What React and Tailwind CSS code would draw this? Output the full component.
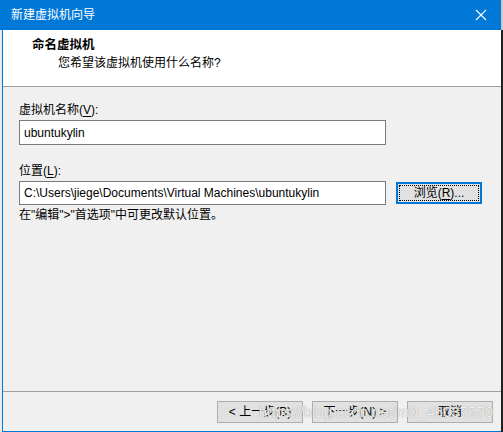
export default function App() {
  const font = "font-['Liberation_Sans','Noto_Sans_CJK_SC',sans-serif]";

  return (
    <div className={`relative w-[503px] h-[432px] overflow-hidden bg-[#f0f0f0] text-[12px] leading-[16px] text-black ${font}`}>
      {/* title bar */}
      <div className="flex">
        <div className="w-[501px] h-[30px] bg-[#0078d7] flex items-center justify-between pl-[11px] pr-[10px] text-white">
          <span className="text-[12px]">新建虚拟机向导</span>
          <svg width="12" height="12" viewBox="0 0 12 12" className="mr-[4px]">
            <path d="M1 1 L11 11 M11 1 L1 11" stroke="#fff" strokeWidth="1.1" fill="none" />
          </svg>
        </div>
        <div className="w-[2px] h-[30px] bg-[#c9c9c9]" />
      </div>

      <div className="flex h-[402px]">
        <div className="w-[2px] bg-[#ebebeb]" />
        <div className="w-[499px] flex flex-col border-l border-b border-[#0078d7]">
          {/* header */}
          <div className="h-[57px] shrink-0 bg-white pt-[7px] border-b border-[#a0a0a0]">
            <div className="pl-[29px] font-bold text-[12.5px]">命名虚拟机</div>
            <div className="pl-[55px] mt-[2px]">您希望该虚拟机使用什么名称?</div>
          </div>

          {/* body */}
          <div className="h-[304px] shrink-0 pl-[16px] pt-[15px]">
            <div>
              虚拟机名称(<span className="underline underline-offset-2">V</span>):
            </div>
            <div className="mt-[2px] w-[367px] h-[25px] bg-white border border-[#7a7a7a] flex items-center pl-[4px]">
              ubuntukylin
            </div>

            <div className="mt-[18px]">
              位置(<span className="underline underline-offset-2">L</span>):
            </div>
            <div className="mt-[2px] flex items-center">
              <div className="w-[367px] h-[24px] bg-white border border-[#7a7a7a] flex items-center pl-[4px]">
                C:\Users\jiege\Documents\Virtual Machines\ubuntukylin
              </div>
              <div className="ml-[10px] w-[86px] h-[22px] border-2 border-[#0078d7] bg-[#e1e1e1] p-[1px]">
                <div className="w-full h-full border border-dotted border-black flex items-center justify-center">
                  浏览(<span className="underline underline-offset-2">R</span>)...
                </div>
              </div>
            </div>
            <div className="mt-[2px]">在"编辑"&gt;"首选项"中可更改默认位置。</div>
          </div>

          {/* footer */}
          <div className="flex-1 border-t border-[#a0a0a0] flex justify-end gap-[9px] pt-[9px] pr-[8px]">
            <div className="w-[86px] h-[22px] border border-[#adadad] bg-[#e1e1e1] flex items-center justify-center">
              &lt; 上一步(B)
            </div>
            <div className="w-[86px] h-[22px] border border-[#adadad] bg-[#e1e1e1] flex items-center justify-center">
              下一步(N) &gt;
            </div>
            <div className="w-[86px] h-[22px] border border-[#adadad] bg-[#e1e1e1] flex items-center justify-center">
              取消
            </div>
          </div>
        </div>
        <div className="w-[2px] bg-[#222222]" />
      </div>

      {/* watermark */}
      <div className="absolute right-[10px] top-[402px] text-[15px] leading-[20px] text-white/85 [text-shadow:0_0_1px_#7a7a7a] font-['Liberation_Sans',sans-serif] pointer-events-none">
        https://blog.csdn.net/m0_46037570
      </div>
    </div>
  );
}
